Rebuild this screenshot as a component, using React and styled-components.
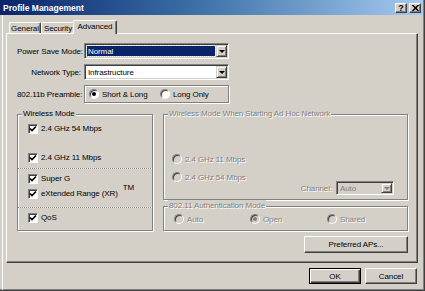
import styled, { createGlobalStyle } from "styled-components"

const GlobalStyle = createGlobalStyle`
  html, body { margin: 0; padding: 0; background: #d4d0c8; }
  body {
    font-family: "Liberation Sans", Arial, sans-serif;
    font-size: 8px;
    letter-spacing: -0.1px;
    color: #000;
  }
  * { box-sizing: border-box; }
`

function Check({ label, children }) {
    return (
        <CheckRow>
            <CheckBox>
                <svg width="8" height="8" viewBox="0 0 8 8">
                    <path d="M1 3.5 L3 5.5 L7 1.5" stroke="#000" strokeWidth="1.6" fill="none" />
                </svg>
            </CheckBox>
            <span>{label}</span>
            {children}
        </CheckRow>
    )
}

function Radio({ label, checked, disabled }) {
    return (
        <RadioRow $disabled={disabled}>
            <RadioDot $checked={checked} $disabled={disabled} />
            <span>{label}</span>
        </RadioRow>
    )
}

function Combo({ value, width, height, selected, disabled }) {
    return (
        <ComboBox $width={width} $height={height} $disabled={disabled}>
            <ComboValue $selected={selected} $disabled={disabled}>{value}</ComboValue>
            <DropButton $disabled={disabled}><Arrow $disabled={disabled} /></DropButton>
        </ComboBox>
    )
}

export default function App() {
    return (
        <>
            <GlobalStyle />
            <Window>
                <TitleBar>
                    <Title>Profile Management</Title>
                    <CaptionButtons>
                        <CaptionButton>?</CaptionButton>
                        <CaptionButton>
                            <svg width="7" height="6" viewBox="0 0 7 6">
                                <path d="M0.5 0 L6.5 6 M6.5 0 L0.5 6" stroke="#000" strokeWidth="1.5" />
                            </svg>
                        </CaptionButton>
                    </CaptionButtons>
                </TitleBar>

                <Body>
                    <Tabs>
                        <Tab $w={32}>General</Tab>
                        <Tab $w={34}>Security</Tab>
                        <Tab $w={44} $active>Advanced</Tab>
                    </Tabs>

                    <Panel>
                        <Form>
                            <Label>Power Save Mode:</Label>
                            <Combo value="Normal" width={145} height={16} selected />
                            <Label>Network Type:</Label>
                            <Combo value="Infrastructure" width={145} height={16} />
                            <Label>802.11b Preamble:</Label>
                            <PreambleBox>
                                <Radio label="Short & Long" checked />
                                <Radio label="Long Only" />
                            </PreambleBox>
                        </Form>

                        <Columns>
                            <WirelessGroup>
                                <Caption>Wireless Mode</Caption>
                                <CheckSection $pad="7px 0 4px 10px" $gap={16}>
                                    <Check label="2.4 GHz 54 Mbps" />
                                    <Check label="2.4 GHz 11 Mbps" />
                                </CheckSection>
                                <Divider />
                                <CheckSection $pad="3px 0 7px 10px" $gap={2}>
                                    <Check label="Super G" />
                                    <Check label="eXtended Range (XR)">
                                        <Trademark>TM</Trademark>
                                    </Check>
                                </CheckSection>
                                <Divider />
                                <CheckSection $pad="3px 0 0 10px" $gap={0}>
                                    <Check label="QoS" />
                                </CheckSection>
                            </WirelessGroup>

                            <RightColumn>
                                <AdhocGroup>
                                    <Caption $disabled>Wireless Mode When Starting Ad Hoc Network</Caption>
                                    <RadioStack>
                                        <Radio label="2.4 GHz 11 Mbps" disabled />
                                        <Radio label="2.4 GHz 54 Mbps" disabled />
                                    </RadioStack>
                                    <ChannelField>
                                        <DisabledText>Channel:</DisabledText>
                                        <Combo value="Auto" width={58} height={14} disabled />
                                    </ChannelField>
                                </AdhocGroup>
                                <AuthGroup>
                                    <Caption $disabled>802.11 Authentication Mode</Caption>
                                    <Radio label="Auto" disabled />
                                    <Radio label="Open" checked disabled />
                                    <Radio label="Shared" disabled />
                                </AuthGroup>
                            </RightColumn>

                            <PreferredButton>Preferred APs...</PreferredButton>
                        </Columns>
                    </Panel>

                    <Footer>
                        <PushButton $default>OK</PushButton>
                        <PushButton>Cancel</PushButton>
                    </Footer>
                </Body>
            </Window>
        </>
    )
}

const Window = styled.div`
    width: 425px;
    height: 291px;
    background: #d4d0c8;
    border-right: 1px solid #404040;
    border-bottom: 1px solid #404040;
    box-shadow: inset -1px -1px 0 #808080;
    display: flex;
    flex-direction: column;
`

const TitleBar = styled.div`
    height: 15px;
    margin-right: 1px;
    padding: 0 2px 0 3px;
    background: linear-gradient(90deg, #0a246a 0%, #3a6ea5 45%, #a6caf0 100%);
    display: flex;
    align-items: center;
    justify-content: space-between;
`

const Title = styled.span`
    color: #fff;
    font-weight: bold;
    font-size: 8.5px;
    letter-spacing: 0;
`

const CaptionButtons = styled.div`
    display: flex;
    gap: 2px;
`

const CaptionButton = styled.div`
    width: 12px;
    height: 10px;
    background: #d4d0c8;
    border: 1px solid;
    border-color: #fff #404040 #404040 #fff;
    box-shadow: inset -1px -1px 0 #808080;
    display: flex;
    align-items: center;
    justify-content: center;
    font-weight: bold;
    font-size: 9px;
    line-height: 8px;
`

const Body = styled.div`
    flex: 1;
    margin-left: 2px;
    border-left: 1px solid #fff;
    padding: 5px 6px 0 3px;
    display: flex;
    flex-direction: column;
`

const Tabs = styled.div`
    height: 13px;
    padding-left: 3px;
    display: flex;
    align-items: flex-end;
    position: relative;
    z-index: 1;
`

const Tab = styled.div`
    width: ${p => p.$w}px;
    height: ${p => (p.$active ? 14 : 11)}px;
    margin: ${p => (p.$active ? "0 0 -1px -2px" : "0")};
    background: #d4d0c8;
    border-top: 1px solid #fff;
    border-left: 1px solid #fff;
    border-right: 1px solid #404040;
    box-shadow: inset -1px 0 0 #808080;
    border-radius: 2px 2px 0 0;
    display: flex;
    align-items: center;
    justify-content: center;
    padding-bottom: ${p => (p.$active ? 2 : 0)}px;
    white-space: nowrap;
`

const Panel = styled.div`
    height: 230px;
    border: 1px solid;
    border-color: #fff #404040 #404040 #fff;
    box-shadow: inset -1px -1px 0 #808080;
    padding: 9px 10px 0 10px;
`

const Form = styled.div`
    display: grid;
    grid-template-columns: 64px 145px;
    grid-template-rows: 16px 16px 18px;
    column-gap: 3px;
    row-gap: 5px;
    align-items: center;
`

const Label = styled.span`
    text-align: right;
    white-space: nowrap;
`

const ComboBox = styled.div`
    width: ${p => p.$width}px;
    height: ${p => p.$height}px;
    background: ${p => (p.$disabled ? "#d4d0c8" : "#fff")};
    border: 1px solid;
    border-color: #808080 #fff #fff #808080;
    box-shadow: inset 1px 1px 0 #404040, inset -1px -1px 0 #d4d0c8;
    padding: 2px;
    display: flex;
    align-items: stretch;
`

const ComboValue = styled.span`
    flex: 1;
    display: flex;
    align-items: center;
    padding-left: 1px;
    margin-right: 1px;
    background: ${p => (p.$selected ? "#0a246a" : "transparent")};
    color: ${p => (p.$selected ? "#fff" : p.$disabled ? "#808080" : "#000")};
    outline: ${p => (p.$selected ? "1px dotted #d4d0c8" : "none")};
`

const DropButton = styled.span`
    width: 11px;
    margin: -1px -1px -1px 0;
    background: #d4d0c8;
    border: 1px solid;
    border-color: #d4d0c8 #404040 #404040 #d4d0c8;
    box-shadow: inset 1px 1px 0 #fff, inset -1px -1px 0 #808080;
    display: flex;
    align-items: center;
    justify-content: center;
`

const Arrow = styled.span`
    width: 0;
    height: 0;
    border-left: 3px solid transparent;
    border-right: 3px solid transparent;
    border-top: 3px solid ${p => (p.$disabled ? "#808080" : "#000")};
`

const Etched = styled.div`
    position: relative;
    border: 1px solid #808080;
    box-shadow: inset 1px 1px 0 #fff, 1px 1px 0 #fff;
`

const PreambleBox = styled(Etched)`
    height: 18px;
    padding-left: 4px;
    display: grid;
    grid-template-columns: 71px auto;
    align-items: center;
`

const RadioRow = styled.div`
    height: 12px;
    display: flex;
    align-items: center;
    gap: 3px;
    white-space: nowrap;
    color: ${p => (p.$disabled ? "#808080" : "#000")};
    text-shadow: ${p => (p.$disabled ? "1px 1px 0 #fff" : "none")};
`

const RadioDot = styled.span`
    width: 10px;
    height: 10px;
    flex: none;
    border-radius: 50%;
    border: 1px solid;
    border-color: #808080 #fff #fff #808080;
    box-shadow: inset 1px 1px 0 #404040;
    background: ${p => (p.$disabled ? "#d4d0c8" : "#fff")};
    display: flex;
    align-items: center;
    justify-content: center;

    &::after {
        content: "";
        width: 4px;
        height: 4px;
        border-radius: 50%;
        background: ${p => (p.$disabled ? "#808080" : "#000")};
        display: ${p => (p.$checked ? "block" : "none")};
    }
`

const Columns = styled.div`
    margin-top: 11px;
    display: grid;
    grid-template-columns: 136px 245px;
    column-gap: 10px;
    row-gap: 5px;
`

const WirelessGroup = styled(Etched)`
    height: 117px;
    display: flex;
    flex-direction: column;
`

const Caption = styled.span`
    position: absolute;
    top: -7px;
    left: 4px;
    padding: 0 1px;
    line-height: 12px;
    background: #d4d0c8;
    white-space: nowrap;
    color: ${p => (p.$disabled ? "#808080" : "#000")};
    text-shadow: ${p => (p.$disabled ? "1px 1px 0 #fff" : "none")};
`

const CheckSection = styled.div`
    padding: ${p => p.$pad};
    display: flex;
    flex-direction: column;
    gap: ${p => p.$gap}px;
`

const CheckRow = styled.div`
    height: 13px;
    display: flex;
    align-items: center;
    gap: 3px;
    white-space: nowrap;
`

const CheckBox = styled.span`
    width: 10px;
    height: 10px;
    flex: none;
    background: #fff;
    border: 1px solid;
    border-color: #808080 #fff #fff #808080;
    box-shadow: inset 1px 1px 0 #404040;
    display: flex;
    align-items: center;
    justify-content: center;
`

const Trademark = styled.span`
    align-self: flex-start;
    margin: -4px 0 0 2px;
    font-size: 8px;
`

const Divider = styled.div`
    height: 1px;
    background: repeating-linear-gradient(90deg, #808080 0 1px, #fff 1px 2px);
`

const RightColumn = styled.div`
    display: flex;
    flex-direction: column;
    gap: 6px;
`

const AdhocGroup = styled(Etched)`
    height: 86px;
    padding: 38px 13px 4px 8px;
    display: flex;
    justify-content: space-between;
`

const RadioStack = styled.div`
    display: flex;
    flex-direction: column;
    gap: 6px;
    align-self: flex-start;
`

const ChannelField = styled.div`
    align-self: flex-end;
    display: flex;
    align-items: center;
    gap: 4px;
`

const DisabledText = styled.span`
    color: #808080;
    text-shadow: 1px 1px 0 #fff;
`

const AuthGroup = styled(Etched)`
    height: 25px;
    padding: 6px 0 0 10px;
    display: grid;
    grid-template-columns: 76px 77px auto;
    align-items: start;
`

const PushButton = styled.button`
    width: ${p => (p.$wide ? 104 : 52)}px;
    height: 16px;
    padding: 0;
    font: inherit;
    letter-spacing: inherit;
    color: #000;
    background: #d4d0c8;
    border: 1px solid;
    border-color: ${p => (p.$default ? "#000" : "#fff #404040 #404040 #fff")};
    box-shadow: ${p => (p.$default
        ? "inset 1px 1px 0 #fff, inset -1px -1px 0 #404040, inset -2px -2px 0 #808080"
        : "inset -1px -1px 0 #808080")};
`

const PreferredButton = styled(PushButton).attrs({ $wide: true })`
    grid-column: 2;
    justify-self: end;
    height: 17px;
`

const Footer = styled.div`
    margin-top: 5px;
    display: flex;
    justify-content: flex-end;
    gap: 4px;
    padding-right: 1px;
`
